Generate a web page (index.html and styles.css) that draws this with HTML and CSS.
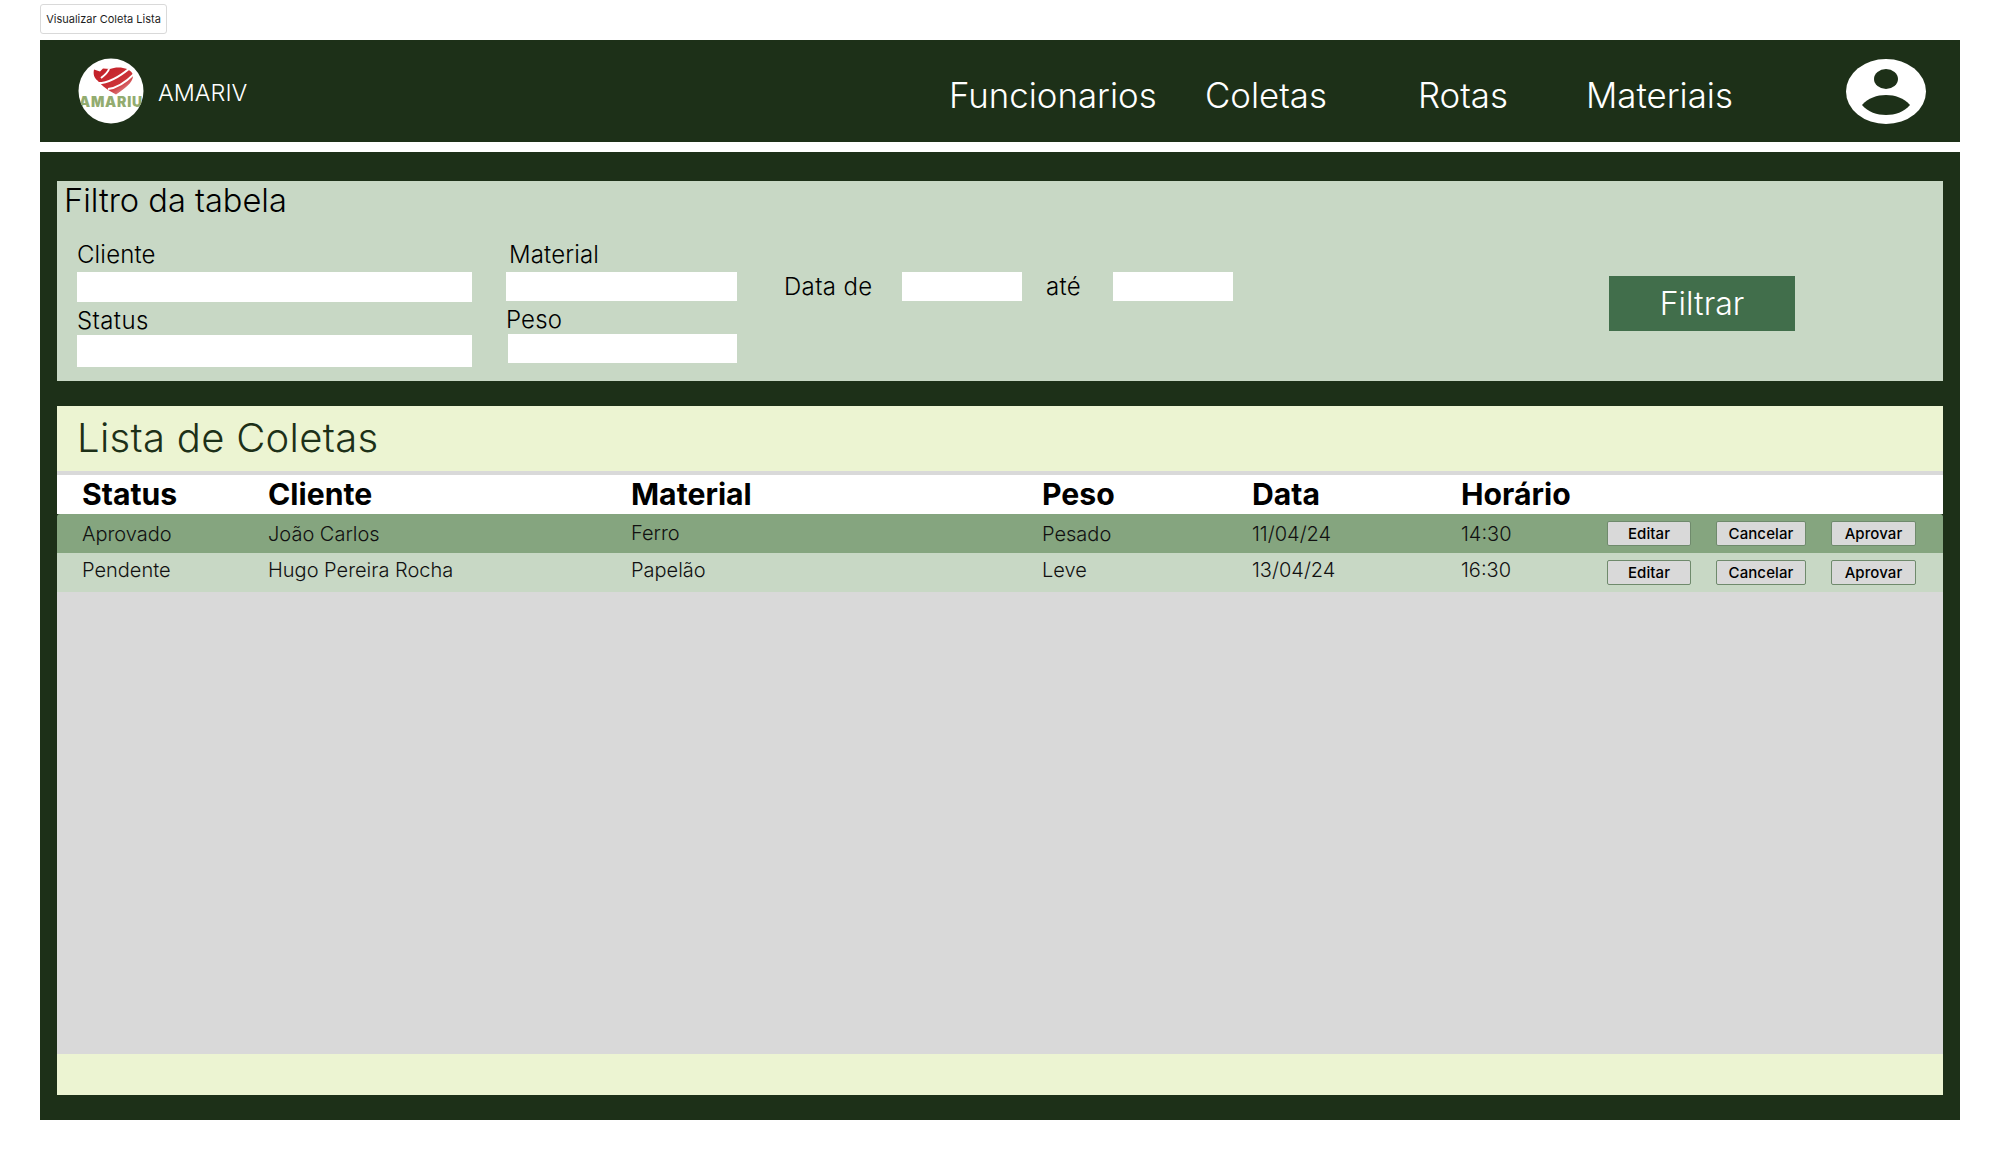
FILE: index.html
```html
<!DOCTYPE html>
<html lang="pt">
<head>
<meta charset="utf-8">
<title>Visualizar Coleta Lista</title>
<link rel="stylesheet" href="styles.css">
</head>
<body>
<div class="tab-row"><span class="tab">Visualizar Coleta Lista</span></div>
<header class="topbar">
  <div class="brand">
    <svg class="logo" viewBox="0 0 66 66" aria-hidden="true">
      <defs>
        <clipPath id="c"><circle cx="33" cy="33" r="32.5"/></clipPath>
        <linearGradient id="r" x1="0.2" y1="0.2" x2="0.9" y2="0.9"><stop offset="0" stop-color="#c4222a"/><stop offset="0.6" stop-color="#cc3338"/><stop offset="1" stop-color="#e3999a"/></linearGradient>
      </defs>
      <circle cx="33" cy="33" r="32.5" fill="#fff"/>
      <path d="M16 11.500l6 2 3-3 7 .5c3-1 8-2 13-1 6 1 10 4 10 8 0 7-9 13-17 18.500C31 33 24 28 19.500 22.500 16 20 15 16 16 11.500z" fill="url(#r)"/>
      <path d="M18 25c10 1 22-5 34-15" fill="none" stroke="#fff" stroke-width="2.200"/>
      <path d="M30 31c9-1 18-7 26-15" fill="none" stroke="#fff" stroke-width="1.800"/>
      <path d="M31 11c-1 3-4 6-8 9" fill="none" stroke="#fff" stroke-width="2"/>
      <g clip-path="url(#c)">
        <text x="33" y="49" text-anchor="middle" class="logo-text">AMARIU</text>
      </g>
    </svg>
    <span class="brand-name">AMARIV</span>
  </div>
  <nav class="nav">
    <a class="nav-item nav-func">Funcionarios</a>
    <a class="nav-item nav-col">Coletas</a>
    <a class="nav-item nav-rot">Rotas</a>
    <a class="nav-item nav-mat">Materiais</a>
  </nav>
  <svg class="avatar" viewBox="0 0 81 65" preserveAspectRatio="none" aria-hidden="true">
    <ellipse cx="40" cy="32.500" rx="40" ry="32.500" fill="#fff"/>
    <ellipse cx="40" cy="20" rx="12" ry="10" fill="#1d3018"/>
    <path d="M16 46C22 39 31 36 40 36S58 39 64 46C58 53 49 56 40 56S22 53 16 46z" fill="#1d3018"/>
  </svg>
</header>
<main class="panel">
  <section class="filter">
    <h2 class="filter-title">Filtro da tabela</h2>
    <div class="filter-body">
      <div class="fields">
        <label class="field">
          <span class="field-label">Cliente</span>
          <span class="box box-wide"></span>
        </label>
        <label class="field">
          <span class="field-label label-mat">Material</span>
          <span class="box box-mid"></span>
        </label>
        <label class="field field-c">
          <span class="field-label label-status">Status</span>
          <span class="box box-status"></span>
        </label>
        <label class="field field-d">
          <span class="field-label label-peso">Peso</span>
          <span class="box box-peso"></span>
        </label>
      </div>
      <div class="dates">
        <span class="field-label date-from">Data de</span>
        <span class="box box-date"></span>
        <span class="field-label date-to">até</span>
        <span class="box box-date"></span>
      </div>
      <span class="filter-btn">Filtrar</span>
    </div>
  </section>
  <section class="list">
    <h1 class="list-title">Lista de Coletas</h1>
    <div class="list-gap"></div>
    <div class="row head">
      <span>Status</span><span>Cliente</span><span>Material</span><span>Peso</span><span>Data</span><span>Horário</span><span></span>
    </div>
    <div class="row dark">
      <span>Aprovado</span><span>João Carlos</span><span class="up">Ferro</span><span>Pesado</span><span>11/04/24</span><span>14:30</span>
      <span class="actions"><span class="act act-e">Editar</span><span class="act act-c">Cancelar</span><span class="act act-a">Aprovar</span></span>
    </div>
    <div class="row light">
      <span>Pendente</span><span>Hugo Pereira Rocha</span><span>Papelão</span><span>Leve</span><span>13/04/24</span><span>16:30</span>
      <span class="actions"><span class="act act-e">Editar</span><span class="act act-c">Cancelar</span><span class="act act-a">Aprovar</span></span>
    </div>
    <div class="list-empty"></div>
    <div class="list-foot"></div>
  </section>
</main>
</body>
</html>
```
FILE: styles.css
```css
* { box-sizing: border-box; }
html, body { margin: 0; padding: 0; background: #fff; }
body { width: 2000px; height: 1160px; overflow: hidden; font-family: Inter, "Liberation Sans", sans-serif; color: #000; }
h1, h2 { margin: 0; font-weight: 300; }

.tab-row { height: 40px; padding: 4px 0 0 40px; }
.tab { display: flex; align-items: center; justify-content: center; width: 127px; height: 30px; border: 1px solid #d9d9d9; border-radius: 3px; font-size: 11px; color: #1e1e1e; background: #fff; }

.topbar { display: flex; align-items: center; height: 102px; margin: 0 40px 10px; padding: 0 33px 0 38px; background: #1d3018; color: #fff; }
.brand { display: flex; align-items: center; gap: 14px; }
.logo { width: 66px; height: 66px; display: block; }
.logo-text { font-family: Inter, "Liberation Sans", sans-serif; font-weight: 900; font-size: 14px; fill: #93ac70; letter-spacing: 0.8px; }
.brand-name { margin-top: 2px; font-size: 23.400px; font-weight: 300; }
.nav { display: flex; margin-left: auto; margin-top: 8px; font-size: 34.800px; font-weight: 300; }
.nav-item { display: block; }
.nav-func { width: 256px; }
.nav-col { width: 213px; }
.nav-rot { width: 168px; }
.nav-mat { width: 260px; }
.avatar { width: 81px; height: 65px; display: block; flex: none; }

.panel { height: 968px; margin: 0 40px; padding: 29px 17px 25px; background: #1d3018; }

.filter { height: 200px; margin-bottom: 25px; padding: 0 7px; background: #c8d8c5; }
.filter-title { font-size: 32.600px; line-height: 39px; }
.filter-body { display: flex; margin-top: 20px; padding-left: 13px; }
.fields { display: grid; grid-template-columns: 429px 231px; grid-template-rows: 62px 66px; width: 660px; }
.field { display: flex; flex-direction: column; }
.field-c { padding-top: 4px; }
.field-d { padding-top: 4px; padding-left: 2px; }
.field-label { font-size: 24px; line-height: 30px; font-weight: 300; color: #000; letter-spacing: .15px; }
.label-mat { margin-left: 3px; }
.label-status { line-height: 29px; letter-spacing: .4px; }
.label-peso { line-height: 28px; margin-left: -2px; }
.box { display: block; background: #fff; }
.box-wide { width: 395px; height: 31px; margin-top: 2px; }
.box-status { width: 395px; height: 32px; }
.box-mid { width: 231px; height: 29px; margin-top: 2px; }
.box-peso { width: 229px; height: 29px; }
.dates { display: flex; align-items: center; align-self: flex-start; height: 29px; margin-top: 32px; margin-left: 47px; }
.box-date { width: 120px; height: 29px; }
.date-from { width: 118px; letter-spacing: .35px; }
.date-to { width: 91px; padding-left: 24px; letter-spacing: .35px; }
.filter-btn { display: flex; align-items: center; justify-content: center; width: 186px; height: 55px; margin-top: 36px; margin-left: 376px; background: #416e4b; color: #fff; font-size: 32px; font-weight: 300; }

.list { height: 689px; display: flex; flex-direction: column; }
.list-title { height: 65px; padding-left: 20px; background: #ecf4d2; color: #1d3018; font-size: 40px; line-height: 63px; letter-spacing: .3px; }
.list-gap { height: 4px; background: #d9d9d9; }
.row { display: grid; grid-template-columns: 186px 363px 411px 210px 209px 146px 1fr; align-items: center; padding-left: 25px; font-size: 20px; font-weight: 300; }
.head { height: 39px; padding-bottom: 2px; background: #fff; font-size: 30.200px; font-weight: 700; }
.dark { height: 39px; background: #85a57f; color: #111; border-radius: 3px 3px 0 0; }
.light { height: 39px; padding-bottom: 5px; background: #c8d8c5; color: #111; }
.light .actions { margin-bottom: -5px; }
.up { margin-bottom: 2px; }
.actions { display: flex; align-items: center; }
.act { display: flex; align-items: center; justify-content: center; height: 25px; border: 1px solid #6f8a6c; border-radius: 2px; background: #d9d9d9; color: #000; font-size: 15px; font-weight: 500; letter-spacing: .1px; }
.act-e { width: 84px; margin-right: 25px; }
.act-c { width: 90px; margin-right: 25px; }
.act-a { width: 85px; }
.list-empty { flex: 1; background: #d9d9d9; }
.list-foot { height: 41px; background: #ecf4d2; }
```
